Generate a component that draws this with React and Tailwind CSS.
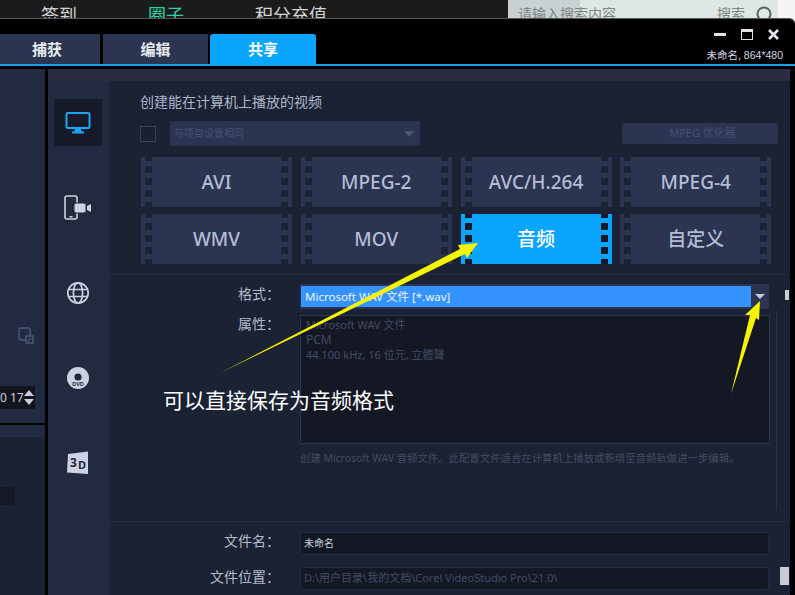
import React from 'react';

const font = "font-['Noto_Sans','Noto_Sans_CJK_SC',sans-serif]";

// film strip holes down one side of a format card
function Holes({ active, side }) {
  return (
    <div className={`flex h-full w-[11px] shrink-0 flex-col justify-between ${side === 'left' ? 'items-end' : 'items-start'} ${active ? 'bg-[#0aa5ff]' : 'bg-[#2b3450]'}`}>
      <span className={`h-[4px] w-[7px] ${active ? 'bg-[#141a2b]' : 'bg-[#1b2234]'}`} />
      <span className={`h-[7px] w-[7px] ${active ? 'bg-[#141a2b]' : 'bg-[#1b2234]'}`} />
      <span className={`h-[7px] w-[7px] ${active ? 'bg-[#141a2b]' : 'bg-[#1b2234]'}`} />
      <span className={`h-[7px] w-[7px] ${active ? 'bg-[#141a2b]' : 'bg-[#1b2234]'}`} />
      <span className={`h-[5px] w-[7px] ${active ? 'bg-[#141a2b]' : 'bg-[#1b2234]'}`} />
    </div>
  );
}

function FormatCard({ label, active }) {
  return (
    <div className={`flex h-[50px] w-[151px] ${active ? 'bg-[#0aa5ff]' : 'bg-[#2b3450]'}`}>
      <Holes active={active} side="left" />
      <div className={`flex flex-1 items-center justify-center text-[19px] font-medium ${active ? 'text-white' : 'text-[#b3bcd6]'}`}>{label}</div>
      <Holes active={active} side="right" />
    </div>
  );
}

function NavItem({ active, children }) {
  return (
    <div className={`flex h-[47px] w-[48px] items-center justify-center ${active ? 'bg-[#171b29]' : ''}`}>{children}</div>
  );
}

function MonitorIcon() {
  return (
    <svg width="26" height="24" viewBox="0 0 26 24" fill="none">
      <rect x="1.5" y="2" width="23" height="15" rx="1.5" stroke="#1ba6f5" strokeWidth="2" />
      <path d="M10.5 17.5h5l1.5 3.5H9z" fill="#1ba6f5" />
      <rect x="7" y="20.5" width="12" height="2" fill="#1ba6f5" />
    </svg>
  );
}

function PhoneCamIcon() {
  return (
    <svg width="28" height="26" viewBox="0 0 28 26" fill="none">
      <rect x="1" y="1" width="12" height="23" rx="2" stroke="#ccd2e2" strokeWidth="1.6" />
      <rect x="5.5" y="21" width="3" height="1.5" fill="#ccd2e2" />
      <rect x="10" y="8" width="12" height="10" rx="2" fill="#ccd2e2" stroke="#222a3f" strokeWidth="1" />
      <path d="M23 11l4-2v8l-4-2z" fill="#ccd2e2" />
    </svg>
  );
}

function GlobeIcon() {
  return (
    <svg width="24" height="24" viewBox="0 0 24 24" fill="none" stroke="#ccd2e2" strokeWidth="1.7">
      <circle cx="12" cy="12" r="10.2" />
      <ellipse cx="12" cy="12" rx="4.6" ry="10.2" />
      <path d="M2.5 8.5h19M2.5 15.5h19" />
    </svg>
  );
}

function DvdIcon() {
  return (
    <svg width="24" height="24" viewBox="0 0 24 24">
      <circle cx="12" cy="12" r="11" fill="#ccd2e2" />
      <circle cx="12" cy="11" r="3.6" fill="#1f2639" />
      <rect x="6.5" y="16" width="11" height="5" rx="1" fill="#ccd2e2" />
      <text x="12" y="20.4" textAnchor="middle" fontSize="5.5" fontWeight="700" fill="#1f2639" fontFamily="Liberation Sans, sans-serif">DVD</text>
    </svg>
  );
}

function ThreeDIcon() {
  return (
    <svg width="22" height="24" viewBox="0 0 22 24">
      <path d="M1 3L21 0.5V23L0 21.5z" fill="#ccd2e2" />
      <text x="3" y="16" fontSize="12" fontWeight="700" fill="#1f2639" fontFamily="Noto Sans, sans-serif">3</text>
      <text x="11" y="18" fontSize="11" fontWeight="700" fill="#1f2639" fontFamily="Noto Sans, sans-serif">D</text>
    </svg>
  );
}

function CopyIcon() {
  return (
    <svg width="16" height="18" viewBox="0 0 16 18" fill="none" stroke="#4f5a78" strokeWidth="1.4">
      <rect x="1" y="1" width="11" height="12" rx="2" />
      <rect x="8" y="9" width="7" height="7" fill="#232b42" />
      <path d="M10 14l3-3" />
    </svg>
  );
}

export default function App() {
  return (
    <div className={`${font} relative flex h-[595px] w-[795px] flex-col overflow-hidden bg-[#f4f5f5]`}>
      {/* page behind the editor window */}
      <div className="flex h-[18px] shrink-0 items-start overflow-hidden">
        <div className="flex h-[18px] w-[508px] bg-[#1b1b1b] pl-[41px] text-[18px] leading-[30px] text-[#d4d4d4]">
          <span className="h-[18px] w-[107px] overflow-hidden">签到</span>
          <span className="h-[18px] w-[107px] overflow-hidden text-[#2fd0a8]">圈子</span>
          <span className="h-[18px] overflow-hidden">积分充值</span>
        </div>
        <div className="flex h-[18px] w-[270px] items-start justify-between bg-[linear-gradient(90deg,#c9d1d2_0,#c9d1d2_72px,#dfe7e4_72px)] pl-[10px] pr-[6px] text-[14px] leading-[28px] text-[#7d8484]">
          <span className="h-[18px] overflow-hidden">请输入搜索内容</span>
          <div className="flex items-start gap-[11px]">
            <span className="h-[18px] overflow-hidden">搜索</span>
            <svg width="16" height="18" viewBox="0 0 16 18" fill="none" stroke="#5c6262" strokeWidth="2" className="mt-[6px]">
              <circle cx="8" cy="8" r="6.5" />
            </svg>
          </div>
        </div>
      </div>

      {/* editor window */}
      <div className="flex min-h-0 flex-1 flex-col rounded-tr-[6px] border-t border-[#55565a] bg-black">
        <div className="flex h-[47px] shrink-0 border-b-2 border-[#1ba0ec]">
          <div className="mt-[15px] flex gap-[2px] self-stretch">
            <div className="flex h-[30px] w-[100px] items-center justify-center bg-[#2b3450] text-[15px] font-bold text-[#e8ebf2]">
              <span className="mr-[6px]">捕获</span>
            </div>
            <div className="ml-[1px] flex h-[30px] w-[105px] items-center justify-center bg-[#2b3450] text-[15px] font-bold text-[#e8ebf2]">编辑</div>
            <div className="flex h-[30px] w-[106px] items-center justify-center rounded-t-[3px] bg-[#0aa5ff] text-[15px] font-bold text-white">共享</div>
          </div>
          <div className="ml-auto flex flex-col items-end pr-[12px] pt-[10px]">
            <div className="flex h-[11px] items-center pr-[4px]">
              <span className="h-[3px] w-[12px] bg-[#dfe2e8]" />
              <span className="ml-[15px] h-[11px] w-[12px] border border-t-[3px] border-[#dfe2e8]" />
              <svg width="11" height="11" viewBox="0 0 11 11" stroke="#e6e9ef" strokeWidth="2.6" className="ml-[15px]">
                <path d="M1 1l9 9M10 1l-9 9" />
              </svg>
            </div>
            <span className="mt-[9px] font-['Liberation_Sans','Noto_Sans_CJK_SC',sans-serif] text-[10.5px] leading-[13px] text-[#d6dae4]">未命名, 864*480</span>
          </div>
        </div>

        <div className="mt-[3px] flex min-h-0 flex-1 pr-[5px]">
          {/* left timeline column, mostly cut off */}
          <div className="flex w-[45px] shrink-0 flex-col bg-[#232b42]">
            <div className="flex h-[354px] flex-col">
              <div className="mt-[258px] flex h-[18px] items-center pl-[18px]">
                <CopyIcon />
              </div>
              <div className="mt-[41px] flex h-[23px] w-[35px] items-center justify-between overflow-hidden bg-[#12151f] pr-[3px] text-[12px] whitespace-nowrap text-[#c9cedb]">
                <span className="leading-none">0 17</span>
                <div className="flex flex-col gap-[3px]">
                  <span className="block h-0 w-0 border-x-[5px] border-b-[6px] border-x-transparent border-b-[#c9cedb]" />
                  <span className="block h-0 w-0 border-x-[5px] border-t-[6px] border-x-transparent border-t-[#c9cedb]" />
                </div>
              </div>
            </div>
            <div className="h-[2px] bg-black" />
            <div className="h-[12px] bg-[#232b42]" />
            <div className="flex-1 bg-[#1b2234] pt-[50px]">
              <div className="h-[18px] w-[15px] bg-[#151926]" />
            </div>
          </div>
          <div className="w-[3px] shrink-0 bg-black" />

          {/* right share panel */}
          <div className="flex min-w-0 flex-1 flex-col bg-[#222a3f]">
            <div className="h-[12px] shrink-0 bg-[#2a2c41]" />
            <div className="flex min-h-0 flex-1">
              <div className="flex w-[62px] shrink-0 flex-col items-center gap-[38px] pt-[18px] pr-[2px]">
                <NavItem active><MonitorIcon /></NavItem>
                <NavItem><PhoneCamIcon /></NavItem>
                <NavItem><GlobeIcon /></NavItem>
                <NavItem><DvdIcon /></NavItem>
                <NavItem><ThreeDIcon /></NavItem>
              </div>

              <div className="flex min-w-0 flex-1 flex-col bg-[#1b2234]">
                <div className="h-[194px] shrink-0 border-b border-[#232b40] pl-[30px] pt-[12px]">
                  <div className="text-[14px] leading-[18px] text-[#aeb6ca]">创建能在计算机上播放的视频</div>
                  <div className="mt-[10px] flex h-[25px] items-center">
                    <span className="h-[16px] w-[16px] border border-[#39415a] bg-[#1a2030]" />
                    <div className="ml-[14px] flex h-[25px] w-[250px] items-center justify-between rounded-[2px] bg-[#2b3450] pl-[4px] pr-[6px] text-[10px] text-[#465070]">
                      <span>与项目设置相同</span>
                      <span className="h-0 w-0 border-x-[5px] border-t-[6px] border-x-transparent border-t-[#4d5773]" />
                    </div>
                    <div className="ml-[202px] flex h-[21px] w-[156px] items-center justify-center rounded-[2px] bg-[#2b3450] pl-[5px] text-[11px] text-[#465070]">MPEG 优化器</div>
                  </div>
                  <div className="mt-[11px] grid w-[631px] grid-cols-4 gap-x-[9px] gap-y-[7px] pl-[1px]">
                    <FormatCard label="AVI" />
                    <FormatCard label="MPEG-2" />
                    <FormatCard label="AVC/H.264" />
                    <FormatCard label="MPEG-4" />
                    <FormatCard label="WMV" />
                    <FormatCard label="MOV" />
                    <FormatCard label="音频" active />
                    <FormatCard label="自定义" />
                  </div>
                </div>

                <div className="flex min-h-0 flex-1 border-b border-[#232b40]">
                  <div className="flex w-[665px] flex-col">
                    <div className="flex items-start pt-[9px]">
                      <span className="w-[170px] text-right text-[14px] leading-[20px] text-[#b4bbcd]">格式：</span>
                      <div className="ml-[20px] flex h-[25px] w-[469px] items-center bg-[#2b3450] pl-[1px]">
                        <div className="flex h-[21px] w-[450px] items-center bg-[#3593ff] pl-[4px] text-[11.5px] text-[#eef4ff]">Microsoft WAV 文件 [*.wav]</div>
                        <div className="flex flex-1 justify-center">
                          <span className="h-0 w-0 border-x-[5px] border-t-[5px] border-x-transparent border-t-[#c4cbdc]" />
                        </div>
                      </div>
                    </div>
                    <div className="mt-[6px] flex items-start">
                      <span className="w-[170px] text-right text-[14px] leading-[18px] text-[#b4bbcd]">属性：</span>
                      <div className="ml-[20px] h-[129px] w-[470px] border border-[#2b3450] bg-[#141825] pl-[5px] pt-[1px] text-[11px] leading-[15px] text-[#434b62]">
                        <div>Microsoft WAV 文件</div>
                        <div className="text-[12px]">PCM</div>
                        <div>44.100 kHz, 16 位元, 立體聲</div>
                      </div>
                    </div>
                    <div className="ml-[190px] mt-[7px] text-[10.4px] leading-[14px] whitespace-nowrap text-[#434b62]">创建 Microsoft WAV 音频文件。此配置文件适合在计算机上播放或新增至音频轨做进一步编辑。</div>
                  </div>
                  <div className="ml-[1px] mt-[35px] h-[200px] w-[1px] bg-[#2a3249]" />
                  <span className="ml-[8px] mt-[15px] h-[10px] w-[4px] bg-[#c8ccd8]" />
                </div>

                <div className="h-[73px] shrink-0 pt-[10px]">
                  <div className="flex items-start">
                    <span className="w-[170px] text-right text-[14px] leading-[17px] text-[#b4bbcd]">文件名：</span>
                    <div className="ml-[20px] flex h-[23px] w-[469px] items-center rounded-[2px] border border-[#252c41] bg-[#141824] pl-[3px] text-[10px] text-[#c9cedb]">未命名</div>
                  </div>
                  <div className="mt-[12px] flex items-start">
                    <span className="w-[170px] text-right text-[14px] leading-[19px] text-[#b4bbcd]">文件位置：</span>
                    <div className="ml-[20px] flex h-[23px] w-[469px] items-center rounded-[2px] border border-[#252c41] bg-[#141824] pl-[3px] text-[11px] text-[#434b62]">D:\用户目录\我的文档\Corel VideoStudio Pro\21.0\</div>
                    <span className="ml-[11px] h-[18px] w-[9px] bg-[#c8ccd8]" />
                  </div>
                </div>
              </div>
            </div>
          </div>
        </div>
      </div>

      {/* annotation drawn over the screenshot */}
      <svg className="absolute left-0 top-0" width="795" height="595" viewBox="0 0 795 595">
        <polygon points="220,373 460,249 458,245 478,243 467,258 465,254" fill="#f7f400" />
        <polygon points="731,394 750,315 745,315 760,301 759,320 756,318" fill="#f7f400" />
      </svg>
      <span className="absolute left-[163px] top-[386px] text-[21px] leading-[28px] text-white">可以直接保存为音频格式</span>
    </div>
  );
}
